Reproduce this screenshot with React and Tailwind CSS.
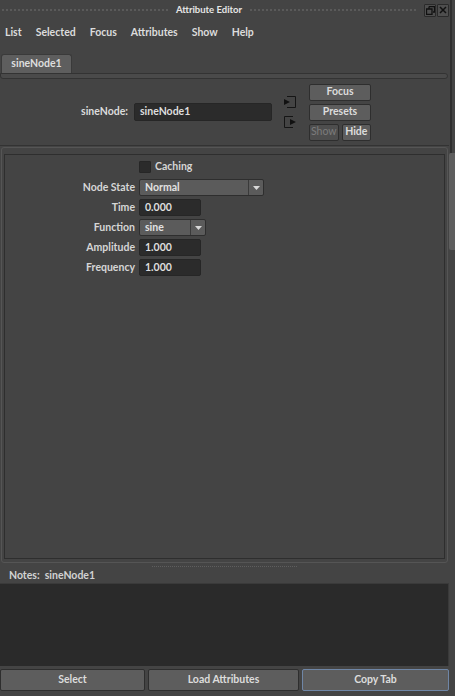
import React from 'react'

// paleta tipo Maya
const menuItems = ['List', 'Selected', 'Focus', 'Attributes', 'Show', 'Help']

const btn =
  'flex items-center justify-center rounded-[2px] border border-[#2e2e2e] font-bold text-[10.5px]'
const field =
  'h-[17px] rounded-[2px] bg-[#2b2b2b] border border-[#262626] text-[#dedede] text-[10.5px] font-bold pl-[5px] flex items-center'

function Dropdown({ value, width }) {
  return (
    <div className={`${width} h-[17px] flex rounded-[2px] bg-[#5b5b5b] border border-[#2e2e2e]`}>
      <div className="flex-1 flex items-center pl-[5px] text-[10.5px] font-bold text-[#e2e2e2]">{value}</div>
      <div className="w-[15px] flex items-center justify-center border-l border-[#3a3a3a]">
        <svg width="7" height="4" viewBox="0 0 7 4">
          <path d="M0 0h7L3.5 4z" fill="#d8d8d8" />
        </svg>
      </div>
    </div>
  )
}

function Row({ label, children }) {
  return (
    <div className="flex items-center h-[17px]">
      <div className="w-[130px] text-right text-[10.5px] font-bold text-[#d6d6d6]">{label}</div>
      <div className="ml-[4px] flex">{children}</div>
    </div>
  )
}

export default function App() {
  return (
    <div className="h-screen w-[455px] flex bg-[#444444] font-['Lato','Liberation_Sans',Arial,sans-serif] overflow-hidden select-none">
      {/* columna principal */}
      <div className="w-[449px] flex flex-col">
        {/* barra de título */}
        <div className="h-[20px] flex items-center pl-[2px] gap-[8px]">
          <div className="flex-1 h-[2px] border-t-2 border-dotted border-[#5a5a5a]" />
          <span className="text-[9.5px] text-[#e6e6e6] font-bold">Attribute Editor</span>
          <div className="flex-1 h-[2px] border-t-2 border-dotted border-[#5a5a5a]" />
          <div className="flex gap-[1px]">
            <div className="w-[12px] h-[13px] border border-[#2a2a2a] bg-[#4e4e4e] rounded-[1px] flex items-center justify-center">
              <svg width="9" height="9" viewBox="0 0 9 9">
                <path d="M3 .5h5.5V6H7M.5 3H6v5.5H.5z M3 .5V3" fill="none" stroke="#111" strokeWidth="1.3" />
              </svg>
            </div>
            <div className="w-[12px] h-[13px] border border-[#2a2a2a] bg-[#4e4e4e] rounded-[1px] flex items-center justify-center">
              <svg width="8" height="8" viewBox="0 0 8 8">
                <path d="M1 1l6 6M7 1L1 7" stroke="#111" strokeWidth="1.5" />
              </svg>
            </div>
          </div>
        </div>

        {/* menú */}
        <div className="h-[24px] pt-[2px] flex items-center pl-[5px] gap-[14px] text-[10.5px] font-bold text-[#dcdcdc]">
          {menuItems.map(m => (
            <span key={m}>{m}</span>
          ))}
        </div>

        {/* pestañas */}
        <div className="mt-[10px] flex flex-col">
          <div className="ml-[1px] w-[71px] h-[19px] rounded-t-[3px] bg-[#5e5e5e] border border-b-0 border-[#3a3a3a] flex items-center justify-center text-[10.5px] font-bold text-[#dedede]">
            sineNode1
          </div>
          <div className="h-[6px] mr-[1px] rounded-b-[3px] rounded-tr-[3px] bg-[#4a4a4a] border border-[#333333]" />
        </div>

        {/* nodo */}
        <div className="h-[67px] flex items-center border-b border-[#333333]">
          <div className="w-[128px] text-right text-[10.5px] font-bold text-[#dcdcdc]">sineNode:</div>
          <div className={`${field} ml-[6px] w-[138px] h-[18px]`}>sineNode1</div>
          <div className="ml-[11px] flex flex-col gap-[8px]">
            <svg width="14" height="12" viewBox="0 0 14 12">
              <path d="M4 .5h8.5v11H4" fill="none" stroke="#151515" strokeWidth="1" />
              <path d="M1 3l6 3-6 3z" fill="#111" />
            </svg>
            <svg width="14" height="12" viewBox="0 0 14 12">
              <path d="M10 .5H1.5v11H10" fill="none" stroke="#151515" strokeWidth="1" />
              <path d="M7 3l6 3-6 3z" fill="#111" />
            </svg>
          </div>
          <div className="ml-[12px] w-[62px] flex flex-col gap-[3px]">
            <div className={`${btn} h-[17px] bg-[#5d5d5d] text-[#dcdcdc]`}>Focus</div>
            <div className={`${btn} h-[17px] bg-[#5d5d5d] text-[#dcdcdc]`}>Presets</div>
            <div className="flex gap-[3px]">
              <div className={`${btn} h-[17px] flex-1 bg-[#4e4e4e] text-[#7c7c7c] font-normal`}>Show</div>
              <div className={`${btn} h-[17px] flex-1 bg-[#5d5d5d] text-[#dcdcdc]`}>Hide</div>
            </div>
          </div>
        </div>

        {/* marco de atributos */}
        <div className="ml-[1px] mr-[1px] h-[416px] mt-[1px] rounded-[3px] border border-[#555555] pt-[6px] px-[2px] pb-[3px] flex">
          <div className="flex-1 border border-[#2e2e2e] pt-[3px] flex flex-col gap-[3px]">
            <div className="flex items-center h-[18px] pl-[134px]">
              <div className="w-[12px] h-[12px] rounded-[1px] bg-[#2b2b2b] border border-[#262626]" />
              <span className="ml-[4px] text-[10.5px] font-bold text-[#d6d6d6]">Caching</span>
            </div>
            <Row label="Node State">
              <Dropdown value="Normal" width="w-[125px]" />
            </Row>
            <Row label="Time">
              <div className={`${field} w-[62px]`}>0.000</div>
            </Row>
            <Row label="Function">
              <Dropdown value="sine" width="w-[67px]" />
            </Row>
            <Row label="Amplitude">
              <div className={`${field} w-[62px]`}>1.000</div>
            </Row>
            <Row label="Frequency">
              <div className={`${field} w-[62px]`}>1.000</div>
            </Row>
          </div>
        </div>

        {/* separador */}
        <div className="h-[6px] flex items-center justify-center">
          <div className="w-[145px] border-t border-dotted border-[#5e5e5e]" />
        </div>

        {/* notas */}
        <div className="h-[13px] pl-[9px] flex items-center text-[10.5px] font-bold text-[#d2d2d2]">
          Notes:&nbsp;&nbsp;sineNode1
        </div>
        <div className="mt-[1px] h-[83px] bg-[#2a2a2a] border-t border-r border-[#3a3a3a]" />

        {/* botones */}
        <div className="mt-[3px] h-[22px] flex gap-[3px]">
          <div className={`${btn} w-[145px] bg-[#5d5d5d] text-[#dcdcdc]`}>Select</div>
          <div className={`${btn} w-[151px] bg-[#5d5d5d] text-[#dcdcdc]`}>Load Attributes</div>
          <div className={`${btn} flex-1 bg-[#5d5d5d] text-[#dcdcdc] border-[#6f86a6]`}>Copy Tab</div>
        </div>
        <div className="flex-1" />
      </div>

      {/* barra de scroll */}
      <div className="w-[6px] flex flex-col">
        <div className="h-[153px] flex">
          <div className="ml-[1px] w-[2px] bg-[#2f2f2f]" />
        </div>
        <div className="h-[97px] bg-[#5e5e5e] rounded-l-[2px]" />
        <div className="flex-1" />
      </div>
    </div>
  )
}
